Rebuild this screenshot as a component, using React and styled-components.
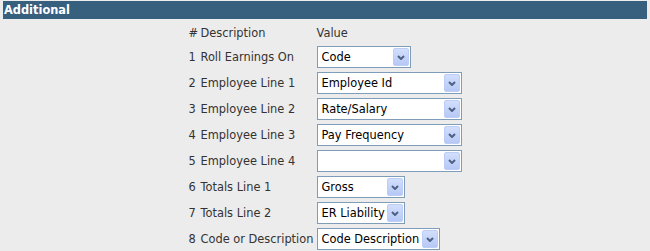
import React from "react";
import styled, { createGlobalStyle } from "styled-components";

const GlobalStyle = createGlobalStyle`
  html, body {
    margin: 0;
    padding: 0;
    background: #ececec;
  }
  body {
    font-family: "DejaVu Sans", Verdana, sans-serif;
  }
`;

const Page = styled.div`
  padding: 1px 3px 0 3px;
  width: 644px;
`;

const SectionHeader = styled.div`
  background: #37607f;
  color: #fff;
  font-weight: bold;
  font-size: 11.4px;
  height: 18px;
  line-height: 18px;
  padding-left: 1px;
`;

const FieldGrid = styled.div`
  display: grid;
  grid-template-columns: 8px 112px 145px;
  column-gap: 4px;
  row-gap: 4px;
  justify-content: center;
  align-items: center;
  margin: 5px 0 0 0;
  font-size: 11.4px;
  color: #333;
`;

const HeadCell = styled.div`
  height: 18px;
  line-height: 18px;
  white-space: nowrap;
`;

const Cell = styled.div`
  white-space: nowrap;
`;

const SelectBox = styled.div`
  box-sizing: border-box;
  width: ${(p) => p.$width}px;
  height: 22px;
  border: 1px solid #7f9db9;
  background: #fff;
  display: flex;
  align-items: center;
  padding: 0 1px 0 4px;
  color: #000;
  font-size: 11.4px;
`;

const SelectText = styled.span`
  flex: 1;
  min-width: 0;
  white-space: nowrap;
  overflow: hidden;
`;

const ArrowButton = styled.div`
  box-sizing: border-box;
  flex: none;
  width: 16px;
  height: 18px;
  border: 1px solid #bccdf6;
  border-radius: 2px;
  background: linear-gradient(#d2defc, #b6c8f6);
  display: flex;
  align-items: center;
  justify-content: center;
`;

const Select = ({ value, width }) => (
  <SelectBox $width={width}>
    <SelectText>{value}</SelectText>
    <ArrowButton>
      <svg width="8" height="5" viewBox="0 0 8 5">
        <path d="M1 1 L4 4 L7 1" fill="none" stroke="#4d6185" strokeWidth="2" />
      </svg>
    </ArrowButton>
  </SelectBox>
);

const rows = [
  { n: 1, label: "Roll Earnings On", value: "Code", w: 94 },
  { n: 2, label: "Employee Line 1", value: "Employee Id", w: 145 },
  { n: 3, label: "Employee Line 2", value: "Rate/Salary", w: 145 },
  { n: 4, label: "Employee Line 3", value: "Pay Frequency", w: 145 },
  { n: 5, label: "Employee Line 4", value: "", w: 145 },
  { n: 6, label: "Totals Line 1", value: "Gross", w: 88 },
  { n: 7, label: "Totals Line 2", value: "ER Liability", w: 88 },
  { n: 8, label: "Code or Description", value: "Code Description", w: 123 },
];

export default function App() {
  return (
    <Page>
      <GlobalStyle />
      <SectionHeader>Additional</SectionHeader>
      <FieldGrid>
        <HeadCell>#</HeadCell>
        <HeadCell>Description</HeadCell>
        <HeadCell>Value</HeadCell>
        {rows.map((r) => (
          <React.Fragment key={r.n}>
            <Cell>{r.n}</Cell>
            <Cell>{r.label}</Cell>
            <Select value={r.value} width={r.w} />
          </React.Fragment>
        ))}
      </FieldGrid>
    </Page>
  );
}
